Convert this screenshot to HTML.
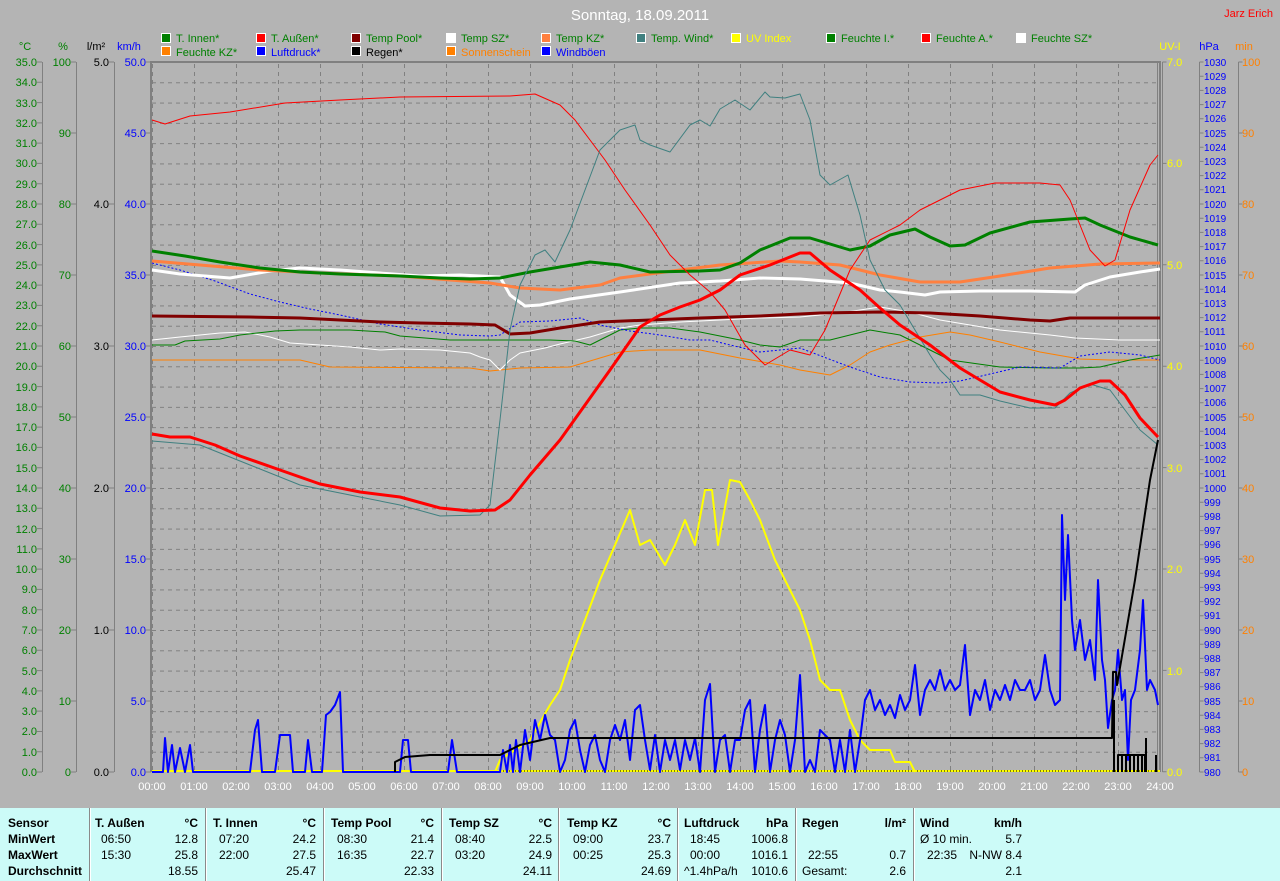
<!DOCTYPE html>
<html><head><meta charset="utf-8"><style>
body{margin:0;width:1280px;height:881px;background:#b4b4b4;overflow:hidden;font-family:"Liberation Sans",sans-serif;position:relative}
svg{position:absolute;left:0;top:0}
#tbl{position:absolute;left:0;top:808px;width:1280px;height:73px;background:#ccfbf8;font-size:12px;color:#000}
#tbl div{position:absolute;white-space:nowrap;line-height:14px}
.b{font-weight:bold}.r{text-align:right}
.sep{position:absolute;top:0;width:1px;height:73px;background:#8a8a8a;border-right:1px solid #fff}
</style></head><body>
<svg width="1280" height="808" font-family="Liberation Sans, sans-serif" font-size="11">
<text x="640" y="20" fill="#fff" font-size="15" text-anchor="middle">Sonntag, 18.09.2011</text>
<text x="1273" y="17" fill="#f00" font-size="11" text-anchor="end">Jarz Erich</text>
<g font-size="11">
<rect x="161.5" y="33.5" width="9" height="9" fill="#008000" stroke="#fff"/><text x="176" y="42" fill="#008000">T. Innen*</text>
<rect x="256.5" y="33.5" width="9" height="9" fill="#f00" stroke="#fff"/><text x="271" y="42" fill="#008000">T. Außen*</text>
<rect x="351.5" y="33.5" width="9" height="9" fill="#800000" stroke="#fff"/><text x="366" y="42" fill="#008000">Temp Pool*</text>
<rect x="446.5" y="33.5" width="9" height="9" fill="#fff" stroke="#fff"/><text x="461" y="42" fill="#008000">Temp SZ*</text>
<rect x="541.5" y="33.5" width="9" height="9" fill="#ff8040" stroke="#fff"/><text x="556" y="42" fill="#008000">Temp KZ*</text>
<rect x="636.5" y="33.5" width="9" height="9" fill="#408080" stroke="#fff"/><text x="651" y="42" fill="#008000">Temp. Wind*</text>
<rect x="731.5" y="33.5" width="9" height="9" fill="#ff0" stroke="#fff"/><text x="746" y="42" fill="#ff0">UV Index</text>
<rect x="826.5" y="33.5" width="9" height="9" fill="#008000" stroke="#fff"/><text x="841" y="42" fill="#008000">Feuchte I.*</text>
<rect x="921.5" y="33.5" width="9" height="9" fill="#f00" stroke="#fff"/><text x="936" y="42" fill="#008000">Feuchte A.*</text>
<rect x="1016.5" y="33.5" width="9" height="9" fill="#fff" stroke="#fff"/><text x="1031" y="42" fill="#008000">Feuchte SZ*</text>
<rect x="161.5" y="46.5" width="9" height="9" fill="#ff8000" stroke="#fff"/><text x="176" y="56" fill="#008000">Feuchte KZ*</text>
<rect x="256.5" y="46.5" width="9" height="9" fill="#00f" stroke="#fff"/><text x="271" y="56" fill="#00f">Luftdruck*</text>
<rect x="351.5" y="46.5" width="9" height="9" fill="#000" stroke="#fff"/><text x="366" y="56" fill="#000">Regen*</text>
<rect x="446.5" y="46.5" width="9" height="9" fill="#ff8000" stroke="#fff"/><text x="461" y="56" fill="#ff8000">Sonnenschein</text>
<rect x="541.5" y="46.5" width="9" height="9" fill="#00f" stroke="#fff"/><text x="556" y="56" fill="#00f">Windböen</text>
</g>
<text x="25" y="50" fill="#008000" text-anchor="middle">°C</text>
<text x="63" y="50" fill="#008000" text-anchor="middle">%</text>
<text x="96" y="50" fill="#000" text-anchor="middle">l/m²</text>
<text x="129" y="50" fill="#00f" text-anchor="middle">km/h</text>
<text x="1170" y="50" fill="#ff0" text-anchor="middle">UV-I</text>
<text x="1209" y="50" fill="#00f" text-anchor="middle">hPa</text>
<text x="1244" y="50" fill="#ff8000" text-anchor="middle">min</text>
<!-- axis lines -->
<g stroke="#808080" stroke-width="1">
<line x1="42.5" y1="62" x2="42.5" y2="772"/><line x1="76.5" y1="62" x2="76.5" y2="772"/>
<line x1="114.5" y1="62" x2="114.5" y2="772"/><line x1="1162.5" y1="62" x2="1162.5" y2="772"/>
<line x1="1199.5" y1="62" x2="1199.5" y2="772"/><line x1="1238.5" y1="62" x2="1238.5" y2="772"/>
</g>
<g stroke="#808080" fill="none">
<line x1="39.5" y1="61.5" x2="39.5" y2="773" stroke-width="5" stroke-dasharray="1 19.286"/>
<line x1="73.5" y1="61.5" x2="73.5" y2="773" stroke-width="5" stroke-dasharray="1 70"/>
<line x1="111.5" y1="61.5" x2="111.5" y2="773" stroke-width="5" stroke-dasharray="1 141"/>
<line x1="148.5" y1="61.5" x2="148.5" y2="773" stroke-width="5" stroke-dasharray="1 70"/>
<line x1="1164.5" y1="61.5" x2="1164.5" y2="773" stroke-width="4" stroke-dasharray="1 100.4"/>
<line x1="1201.5" y1="61.5" x2="1201.5" y2="773" stroke-width="4" stroke-dasharray="1 13.2"/>
<line x1="1240.5" y1="61.5" x2="1240.5" y2="773" stroke-width="4" stroke-dasharray="1 70"/>
</g>
<g fill="#008000" text-anchor="end" font-size="11">
<text x="37" y="776">0.0</text><text x="37" y="756">1.0</text><text x="37" y="735">2.0</text><text x="37" y="715">3.0</text><text x="37" y="695">4.0</text><text x="37" y="675">5.0</text><text x="37" y="654">6.0</text><text x="37" y="634">7.0</text><text x="37" y="614">8.0</text><text x="37" y="593">9.0</text><text x="37" y="573">10.0</text><text x="37" y="553">11.0</text><text x="37" y="533">12.0</text><text x="37" y="512">13.0</text><text x="37" y="492">14.0</text><text x="37" y="472">15.0</text><text x="37" y="451">16.0</text><text x="37" y="431">17.0</text><text x="37" y="411">18.0</text><text x="37" y="391">19.0</text><text x="37" y="370">20.0</text><text x="37" y="350">21.0</text><text x="37" y="330">22.0</text><text x="37" y="309">23.0</text><text x="37" y="289">24.0</text><text x="37" y="269">25.0</text><text x="37" y="249">26.0</text><text x="37" y="228">27.0</text><text x="37" y="208">28.0</text><text x="37" y="188">29.0</text><text x="37" y="167">30.0</text><text x="37" y="147">31.0</text><text x="37" y="127">32.0</text><text x="37" y="107">33.0</text><text x="37" y="86">34.0</text><text x="37" y="66">35.0</text>
<text x="71" y="776">0</text><text x="71" y="705">10</text><text x="71" y="634">20</text><text x="71" y="563">30</text><text x="71" y="492">40</text><text x="71" y="421">50</text><text x="71" y="350">60</text><text x="71" y="279">70</text><text x="71" y="208">80</text><text x="71" y="137">90</text><text x="71" y="66">100</text>
</g>
<g fill="#000" text-anchor="end"><text x="109" y="776">0.0</text><text x="109" y="634">1.0</text><text x="109" y="492">2.0</text><text x="109" y="350">3.0</text><text x="109" y="208">4.0</text><text x="109" y="66">5.0</text></g>
<g fill="#00f" text-anchor="end"><text x="146" y="776">0.0</text><text x="146" y="705">5.0</text><text x="146" y="634">10.0</text><text x="146" y="563">15.0</text><text x="146" y="492">20.0</text><text x="146" y="421">25.0</text><text x="146" y="350">30.0</text><text x="146" y="279">35.0</text><text x="146" y="208">40.0</text><text x="146" y="137">45.0</text><text x="146" y="66">50.0</text></g>
<g fill="#ff0"><text x="1167" y="776">0.0</text><text x="1167" y="675">1.0</text><text x="1167" y="573">2.0</text><text x="1167" y="472">3.0</text><text x="1167" y="370">4.0</text><text x="1167" y="269">5.0</text><text x="1167" y="167">6.0</text><text x="1167" y="66">7.0</text></g>
<g fill="#00f" font-size="10"><text x="1204" y="776">980</text><text x="1204" y="761">981</text><text x="1204" y="747">982</text><text x="1204" y="733">983</text><text x="1204" y="719">984</text><text x="1204" y="705">985</text><text x="1204" y="690">986</text><text x="1204" y="676">987</text><text x="1204" y="662">988</text><text x="1204" y="648">989</text><text x="1204" y="634">990</text><text x="1204" y="619">991</text><text x="1204" y="605">992</text><text x="1204" y="591">993</text><text x="1204" y="577">994</text><text x="1204" y="563">995</text><text x="1204" y="548">996</text><text x="1204" y="534">997</text><text x="1204" y="520">998</text><text x="1204" y="506">999</text><text x="1204" y="492">1000</text><text x="1204" y="477">1001</text><text x="1204" y="463">1002</text><text x="1204" y="449">1003</text><text x="1204" y="435">1004</text><text x="1204" y="421">1005</text><text x="1204" y="406">1006</text><text x="1204" y="392">1007</text><text x="1204" y="378">1008</text><text x="1204" y="364">1009</text><text x="1204" y="350">1010</text><text x="1204" y="335">1011</text><text x="1204" y="321">1012</text><text x="1204" y="307">1013</text><text x="1204" y="293">1014</text><text x="1204" y="279">1015</text><text x="1204" y="264">1016</text><text x="1204" y="250">1017</text><text x="1204" y="236">1018</text><text x="1204" y="222">1019</text><text x="1204" y="208">1020</text><text x="1204" y="193">1021</text><text x="1204" y="179">1022</text><text x="1204" y="165">1023</text><text x="1204" y="151">1024</text><text x="1204" y="137">1025</text><text x="1204" y="122">1026</text><text x="1204" y="108">1027</text><text x="1204" y="94">1028</text><text x="1204" y="80">1029</text><text x="1204" y="66">1030</text></g>
<g fill="#ff8000"><text x="1242" y="776">0</text><text x="1242" y="705">10</text><text x="1242" y="634">20</text><text x="1242" y="563">30</text><text x="1242" y="492">40</text><text x="1242" y="421">50</text><text x="1242" y="350">60</text><text x="1242" y="279">70</text><text x="1242" y="208">80</text><text x="1242" y="137">90</text><text x="1242" y="66">100</text></g>
<g fill="#fff" text-anchor="middle"><text x="152" y="790">00:00</text><text x="194" y="790">01:00</text><text x="236" y="790">02:00</text><text x="278" y="790">03:00</text><text x="320" y="790">04:00</text><text x="362" y="790">05:00</text><text x="404" y="790">06:00</text><text x="446" y="790">07:00</text><text x="488" y="790">08:00</text><text x="530" y="790">09:00</text><text x="572" y="790">10:00</text><text x="614" y="790">11:00</text><text x="656" y="790">12:00</text><text x="698" y="790">13:00</text><text x="740" y="790">14:00</text><text x="782" y="790">15:00</text><text x="824" y="790">16:00</text><text x="866" y="790">17:00</text><text x="908" y="790">18:00</text><text x="950" y="790">19:00</text><text x="992" y="790">20:00</text><text x="1034" y="790">21:00</text><text x="1076" y="790">22:00</text><text x="1118" y="790">23:00</text><text x="1160" y="790">24:00</text></g>
<!-- grid -->
<defs><pattern id="gh" x="0" y="62" width="1008" height="20.286" patternUnits="userSpaceOnUse"><line x1="0" y1="0.5" x2="1008" y2="0.5" stroke="#808080" stroke-dasharray="4 4"/></pattern>
<pattern id="gv" x="152" y="0" width="42" height="710" patternUnits="userSpaceOnUse"><line x1="0.5" y1="0" x2="0.5" y2="710" stroke="#808080" stroke-dasharray="4 4"/></pattern></defs>
<rect x="152" y="62" width="1008" height="710" fill="url(#gh)"/>
<rect x="152" y="62" width="1008" height="710" fill="url(#gv)"/>
<path d="M151 772V62H1160V772" fill="none" stroke="#808080" stroke-width="2"/>
<line x1="1157.5" y1="62" x2="1157.5" y2="772" stroke="#808080"/>
<g fill="none" stroke-linejoin="round">
<polyline stroke="#ff8000" stroke-width="1" points="152,360 300,360 330,367 470,368 490,371 520,368 570,367 600,358 620,352 650,350 700,350 740,358 780,365 800,370 830,375 850,365 870,352 890,345 920,337 950,332 970,335 1000,342 1040,352 1080,359 1110,360 1160,360"/>
<polyline stroke="#fff" stroke-width="1" points="152,340 180,337 220,333 245,332 270,337 290,343 320,345 350,347 380,350 400,349 440,350 470,353 480,357 490,360 500,370 510,360 520,353 545,348 560,344 590,337 620,328 640,325 680,322 720,320 760,318 800,317 840,313 880,307 910,312 940,320 970,325 1000,330 1050,335 1075,338 1120,340 1160,340"/>
<polyline stroke="#008000" stroke-width="1" points="152,345 175,345 185,341 220,339 240,335 275,331 300,330 350,330 385,332 400,336 450,340 480,340 550,340 575,341 590,345 620,330 640,328 670,328 700,332 740,340 760,345 780,347 800,340 830,340 850,335 870,330 900,335 920,345 950,360 1000,367 1050,368 1080,368 1100,367 1130,360 1160,355"/>
<polyline stroke="#00f" stroke-width="1" stroke-dasharray="2 2" points="152,263 180,270 215,281 250,294 280,302 310,309 340,315 380,324 420,330 460,335 490,336 500,335 520,322 550,321 580,318 600,325 630,331 660,335 690,340 710,340 730,345 760,352 800,348 850,367 880,377 910,382 940,383 960,381 990,374 1020,367 1060,368 1080,356 1110,352 1140,355 1160,360"/>
<polyline stroke="#800000" stroke-width="3" points="152,316 250,317 300,318 340,320 380,322 420,323 470,324 495,325 510,334 530,333 560,328 600,322 650,320 700,318 760,316 820,313 880,312 930,313 980,316 1030,320 1050,321 1070,318 1120,318 1160,318"/>
<polyline stroke="#fff" stroke-width="3" points="152,270 180,274 230,278 270,271 300,268 340,270 380,273 420,276 460,275 500,277 510,295 525,306 540,305 570,299 620,292 680,283 720,281 760,278 800,279 850,283 880,290 900,292 925,295 940,292 980,291 1030,291 1075,292 1085,285 1110,277 1140,272 1160,269"/>
<polyline stroke="#ff8040" stroke-width="3" points="152,261 200,265 260,270 320,273 400,276 450,280 490,283 520,288 560,290 600,285 620,278 680,270 720,265 780,261 800,262 840,265 880,275 920,282 960,282 1000,276 1050,268 1100,264 1160,263"/>
<polyline stroke="#008000" stroke-width="3" points="152,251 185,256 220,262 260,268 300,272 340,274 400,276 440,278 470,279 500,278 530,272 560,267 590,262 620,265 650,272 700,271 720,270 740,263 760,250 790,238 810,238 840,247 850,250 870,246 890,235 915,229 930,237 950,246 965,245 990,233 1030,222 1070,219 1085,218 1100,225 1130,237 1158,245"/>
<polyline stroke="#f00" stroke-width="1" points="152,120 165,124 190,116 230,112 285,103 340,100 400,97 510,96 535,94 560,105 575,120 590,140 605,160 625,190 650,225 670,255 690,275 710,292 725,310 745,345 765,365 790,350 810,355 825,330 850,270 870,240 900,225 920,210 960,190 995,183 1040,183 1060,185 1070,200 1090,250 1105,266 1115,260 1130,210 1150,165 1158,155"/>
<polyline stroke="#408080" stroke-width="1" points="152,441 200,445 250,465 300,485 350,495 400,505 440,516 480,515 490,505 500,420 510,330 520,285 535,255 545,250 555,262 570,230 585,190 600,150 620,130 635,125 640,140 650,145 670,152 690,125 700,120 710,126 720,109 735,100 750,110 765,92 770,97 785,98 800,94 810,120 820,175 830,185 848,175 860,215 870,260 885,290 900,305 915,330 930,355 940,370 950,380 960,395 980,395 1000,401 1030,408 1055,408 1070,393 1090,384 1110,390 1125,410 1140,430 1158,445"/>
<polyline stroke="#f00" stroke-width="3" points="152,434 170,437 190,437 215,445 240,456 280,470 320,484 360,492 400,497 440,508 470,511 495,510 510,500 530,475 560,440 585,405 610,370 640,327 660,315 680,307 700,300 720,290 740,275 770,265 800,253 810,253 830,270 860,290 880,308 900,325 930,345 960,368 980,380 1000,392 1030,400 1055,405 1065,400 1080,388 1100,381 1110,381 1125,395 1140,418 1158,437"/>
<line x1="152" y1="771" x2="1160" y2="771" stroke="#ff0" stroke-width="2"/>
<line x1="500" y1="771" x2="1160" y2="771" stroke="#000" stroke-dasharray="1 2"/>
<polyline stroke="#ff0" stroke-width="2" points="495,772 500,760 530,740 550,705 560,690 570,660 585,620 600,580 615,545 630,510 640,545 650,540 665,565 675,545 685,520 695,545 705,490 712,490 718,545 730,480 740,482 750,500 760,520 775,560 790,590 800,610 810,640 820,680 830,690 840,690 850,720 860,740 870,750 890,750 895,762 910,762 915,772"/>
<polyline stroke="#00f" stroke-width="2" points="152,772 163,772 165,738 168,772 172,745 175,772 180,748 185,772 190,745 193,772 250,772 255,730 258,720 262,772 275,772 280,735 290,735 293,772 305,772 308,740 312,772 322,772 326,715 330,712 335,705 340,692 343,772 400,772 403,740 408,740 411,772 448,772 452,740 457,772 500,772 503,750 507,772 510,745 513,772 516,740 520,772 525,730 530,760 535,720 540,740 545,715 550,735 555,740 560,772 565,760 570,730 575,720 580,750 585,772 590,745 595,735 600,760 605,772 610,740 615,725 620,740 625,720 630,760 635,710 640,705 645,740 650,770 655,735 660,772 665,740 670,760 675,740 680,770 685,740 690,760 695,738 700,772 705,700 710,684 715,772 720,740 725,735 730,772 735,740 740,740 745,710 750,700 755,772 760,730 765,705 770,772 775,740 780,720 785,735 790,772 795,740 800,675 805,772 810,760 815,772 820,730 825,735 830,740 835,772 840,740 845,772 850,730 855,772 860,740 865,700 870,690 875,710 880,700 885,715 890,705 895,718 900,695 905,710 910,700 915,665 920,715 925,690 930,680 935,690 940,670 945,690 950,680 955,690 960,685 965,645 970,715 975,690 980,700 985,680 990,710 995,690 1000,700 1005,685 1010,700 1015,680 1020,690 1025,690 1030,680 1035,700 1040,690 1045,655 1050,690 1055,705 1060,700 1062,515 1065,600 1068,535 1072,620 1075,650 1080,620 1085,660 1090,640 1095,680 1098,580 1102,660 1105,680 1108,728 1112,700 1115,690 1118,650 1122,700 1125,690 1128,760 1131,700 1135,690 1140,650 1143,600 1147,690 1150,680 1155,690 1158,705"/>
<polyline stroke="#000" stroke-width="2" points="395,772 395,762 405,757 430,755 500,755 520,745 550,738 1112,738 1113,672 1116,672 1117,685 1135,580 1150,480 1158,440"/>
<path d="M1114 772V700M1118 772V755H1145V772M1122 755V772M1126 755V772M1130 755V772M1134 755V772M1138 755V772M1142 755V772M1146 772V738M1156 772V755" stroke="#000" stroke-width="2"/>
</g>
</svg>
<div id="tbl">
<div class="sep" style="left:89px"></div><div class="sep" style="left:205px"></div><div class="sep" style="left:323px"></div><div class="sep" style="left:441px"></div><div class="sep" style="left:558px"></div><div class="sep" style="left:677px"></div><div class="sep" style="left:795px"></div><div class="sep" style="left:913px"></div>
<div class="b" style="left:8px;top:8px">Sensor</div><div class="b" style="left:8px;top:24px">MinWert</div><div class="b" style="left:8px;top:40px">MaxWert</div><div class="b" style="left:8px;top:56px">Durchschnitt</div>

<div class="b" style="left:95px;top:8px">T. Außen</div><div class="b" style="right:1082px;top:8px">°C</div>
<div style="left:101px;top:24px">06:50</div><div style="right:1082px;top:24px">12.8</div>
<div style="left:101px;top:40px">15:30</div><div style="right:1082px;top:40px">25.8</div>
<div style="right:1082px;top:56px">18.55</div>

<div class="b" style="left:213px;top:8px">T. Innen</div><div class="b" style="right:964px;top:8px">°C</div>
<div style="left:219px;top:24px">07:20</div><div style="right:964px;top:24px">24.2</div>
<div style="left:219px;top:40px">22:00</div><div style="right:964px;top:40px">27.5</div>
<div style="right:964px;top:56px">25.47</div>

<div class="b" style="left:331px;top:8px">Temp Pool</div><div class="b" style="right:846px;top:8px">°C</div>
<div style="left:337px;top:24px">08:30</div><div style="right:846px;top:24px">21.4</div>
<div style="left:337px;top:40px">16:35</div><div style="right:846px;top:40px">22.7</div>
<div style="right:846px;top:56px">22.33</div>

<div class="b" style="left:449px;top:8px">Temp SZ</div><div class="b" style="right:728px;top:8px">°C</div>
<div style="left:455px;top:24px">08:40</div><div style="right:728px;top:24px">22.5</div>
<div style="left:455px;top:40px">03:20</div><div style="right:728px;top:40px">24.9</div>
<div style="right:728px;top:56px">24.11</div>

<div class="b" style="left:567px;top:8px">Temp KZ</div><div class="b" style="right:609px;top:8px">°C</div>
<div style="left:573px;top:24px">09:00</div><div style="right:609px;top:24px">23.7</div>
<div style="left:573px;top:40px">00:25</div><div style="right:609px;top:40px">25.3</div>
<div style="right:609px;top:56px">24.69</div>

<div class="b" style="left:684px;top:8px">Luftdruck</div><div class="b" style="right:492px;top:8px">hPa</div>
<div style="left:690px;top:24px">18:45</div><div style="right:492px;top:24px">1006.8</div>
<div style="left:690px;top:40px">00:00</div><div style="right:492px;top:40px">1016.1</div>
<div style="left:684px;top:56px">^1.4hPa/h</div><div style="right:492px;top:56px">1010.6</div>

<div class="b" style="left:802px;top:8px">Regen</div><div class="b" style="right:374px;top:8px">l/m²</div>
<div style="left:808px;top:40px">22:55</div><div style="right:374px;top:40px">0.7</div>
<div style="left:802px;top:56px">Gesamt:</div><div style="right:374px;top:56px">2.6</div>

<div class="b" style="left:920px;top:8px">Wind</div><div class="b" style="right:258px;top:8px">km/h</div>
<div style="left:920px;top:24px">Ø 10 min.</div><div style="right:258px;top:24px">5.7</div>
<div style="left:927px;top:40px">22:35</div><div style="right:258px;top:40px">N-NW 8.4</div>
<div style="right:258px;top:56px">2.1</div>
</div>
</body></html>
